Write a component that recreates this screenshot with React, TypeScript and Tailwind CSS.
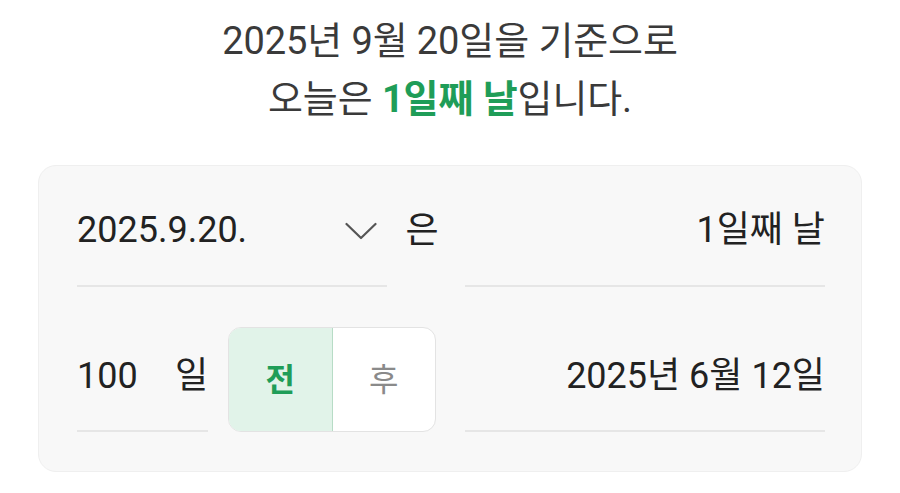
import { useState } from "react";

const font = { fontFamily: 'Roboto, "Noto Sans CJK KR", sans-serif' };

function Chevron() {
   return (
      <svg width="32" height="18" viewBox="0 0 32 18" fill="none">
         <path d="M1.5 2L16 16L30.5 2" stroke="#555" strokeWidth="2.2" strokeLinecap="round" strokeLinejoin="round" />
      </svg>
   );
}

export default function App() {
   const [before, setBefore] = useState(true);

   return (
      <div className="w-[900px] h-[493px] bg-white overflow-hidden" style={font}>
         <div className="pt-[12px] text-center text-[38px] leading-[58px] text-[#3a3a3a] tracking-[-0.1px]">
            <p>2025년 9월 20일을 기준으로</p>
            <p>
               오늘은 <span className="font-bold text-[#1f9d58]">1일째 날</span>입니다.
            </p>
         </div>

         <div className="mx-[38px] mt-[37px] h-[307px] rounded-[18px] border border-[#efefef] bg-[#f8f8f8] pl-[38px] pr-[36px] pt-[15px] text-[36px] text-[#222]">
            <div className="flex h-[106px]">
               <div className="flex w-[310px] items-center justify-between border-b-2 border-[#e6e6e6] pb-[6px]">
                  <span>2025.9.20.</span>
                  <span className="mr-[10px] mt-[2px]"><Chevron /></span>
               </div>
               <div className="flex w-[78px] items-center justify-center pb-[6px] pr-[8px]">은</div>
               <div className="flex flex-1 items-center justify-end border-b-2 border-[#e6e6e6] pb-[6px]">1일째 날</div>
            </div>

            <div className="mt-[40px] flex h-[105px]">
               <div className="flex w-[131px] items-center justify-between border-b-2 border-[#e6e6e6] pb-[6px]">
                  <span>100</span>
                  <span>일</span>
               </div>
               <div className="ml-[20px] flex w-[208px] overflow-hidden rounded-[13px] border border-[#e3e3e3] bg-white">
                  <button
                     onClick={() => setBefore(true)}
                     className={before
                        ? "flex flex-1 items-center justify-center border-r border-[#b7dcc6] bg-[#e1f3e9] text-[32px] font-bold text-[#1f9d58]"
                        : "flex flex-1 items-center justify-center border-r border-[#e3e3e3] text-[32px] text-[#8a8a8a]"}
                  >
                     전
                  </button>
                  <button
                     onClick={() => setBefore(false)}
                     className={!before
                        ? "flex flex-1 items-center justify-center bg-[#e1f3e9] text-[32px] font-bold text-[#1f9d58]"
                        : "flex flex-1 items-center justify-center text-[32px] text-[#8a8a8a]"}
                  >
                     후
                  </button>
               </div>
               <div className="ml-[29px] flex flex-1 items-center justify-end border-b-2 border-[#e6e6e6] pb-[6px]">2025년 6월 12일</div>
            </div>
         </div>
      </div>
   );
}
